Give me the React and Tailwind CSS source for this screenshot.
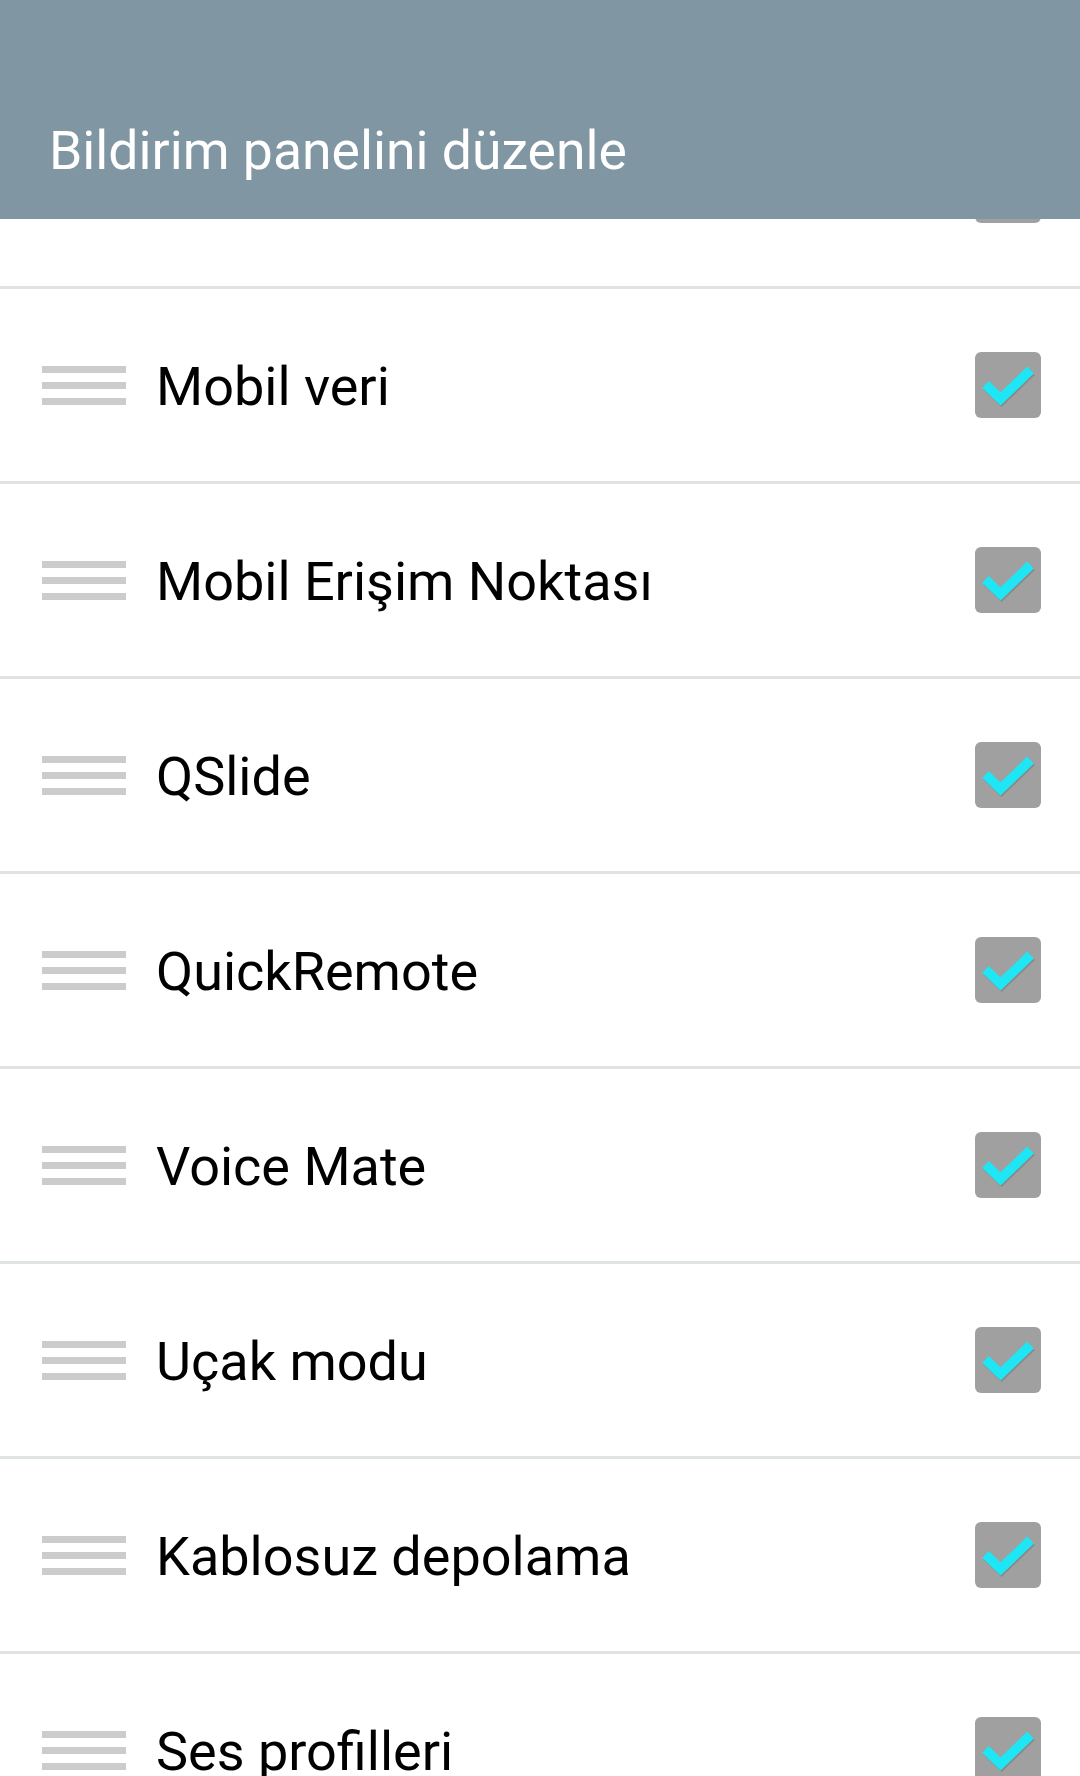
// first row is scrolled under the header, only its checkbox peeks out
const items = [
  '',
  'Mobil veri',
  'Mobil Erişim Noktası',
  'QSlide',
  'QuickRemote',
  'Voice Mate',
  'Uçak modu',
  'Kablosuz depolama',
  'Ses profilleri',
];

function DragHandle() {
  return (
    <div className="flex w-[84px] shrink-0 flex-col gap-[9px]">
      <div className="h-[7px] bg-[#cccccc]" />
      <div className="h-[7px] bg-[#cccccc]" />
      <div className="h-[7px] bg-[#cccccc]" />
    </div>
  );
}

function CheckBox() {
  return (
    <div className="h-[66px] w-[66px] shrink-0 rounded-[6px] bg-[#a0a0a0]">
      <svg viewBox="0 0 66 66" width="66" height="66">
        <path d="M10.5 32.5 L25.6 47 L55.5 18" fill="none" stroke="#7a7a7a" strokeWidth="9.5" strokeLinecap="butt" transform="translate(1 1.5)" opacity="0.6" />
        <path d="M10.5 32.5 L25.6 47 L55.5 18" fill="none" stroke="#1fe6f4" strokeWidth="9.5" strokeLinecap="butt" />
      </svg>
    </div>
  );
}

export default function App() {
  return (
    <div className="h-[1776px] overflow-hidden bg-white font-['Roboto',sans-serif]">
      <header className="relative z-10 flex h-[219px] items-end bg-[#8096a3] pb-[42px] pl-[49px]">
        <h1 className="text-[53.5px] leading-none font-normal text-white">Bildirim panelini düzenle</h1>
      </header>
      <ul className="-mt-[125px]">
        {items.map((name, i) => (
          <li key={i} className="flex h-[195px] items-center border-b-[3px] border-[#dfe3e3] pr-[39px] pl-[42px]">
            <DragHandle />
            <span className="mt-[4px] ml-[30px] flex-1 text-[54px] leading-none text-black">{name}</span>
            <CheckBox />
          </li>
        ))}
      </ul>
    </div>
  );
}
